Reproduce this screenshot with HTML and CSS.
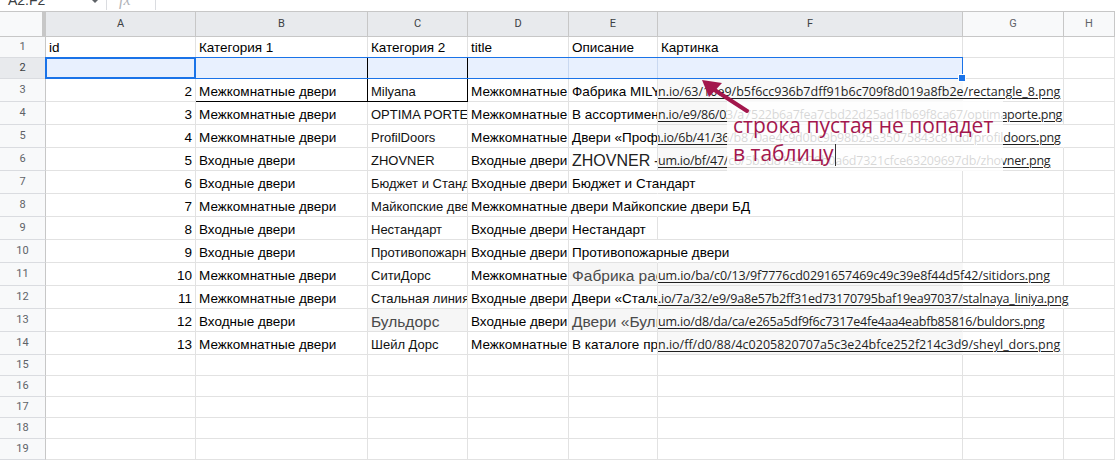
FILE: index.html
```html
<!DOCTYPE html>
<html lang="ru">
<head>
<meta charset="utf-8">
<title>Sheet</title>
<link rel="stylesheet" href="styles.css">
</head>
<body>
<div class="sheet">
  <div class="fbar">
    <div class="fbar-in">
      <span class="namebox">A2:F2</span>
      <span class="dd"></span>
      <span class="sep"></span>
      <span class="fx">fx</span>
      <span class="sep"></span>
    </div>
  </div>

  <div class="row hdr">
    <div class="c c0 corner"></div>
    <div class="c ca hs">A</div>
    <div class="c cb hs">B</div>
    <div class="c cc hs">C</div>
    <div class="c cd hs">D</div>
    <div class="c ce hs">E</div>
    <div class="c cf hs">F</div>
    <div class="c cg">G</div>
    <div class="c ch">H</div>
  </div>

  <div class="row rs">
    <div class="c c0 rh">1</div>
    <div class="c ca">id</div>
    <div class="c cb">Категория 1</div>
    <div class="c cc">Категория 2</div>
    <div class="c cd">title</div>
    <div class="c ce">Описание</div>
    <div class="c cf">Картинка</div>
    <div class="c cg"></div>
    <div class="c ch"></div>
  </div>

  <div class="row rs selrow">
    <div class="c c0 rh rhs">2</div>
    <div class="c ca sb"></div>
    <div class="c cb sb blk-r"></div>
    <div class="c cc sb blk-r"></div>
    <div class="c cd sb"></div>
    <div class="c ce sb"></div>
    <div class="c cf sb"></div>
    <div class="c cg"></div>
    <div class="c ch"></div>
  </div>

  <div class="row rt">
    <div class="c c0 rh">3</div>
    <div class="c ca num">2</div>
    <div class="c cb blk-r blk-b">Межкомнатные двери</div>
    <div class="c cc cct blk-r blk-b">Milyana</div>
    <div class="c cd">Межкомнатные двери</div>
    <div class="c ce">Фабрика MILYANA</div>
    <div class="c cf lk nr"><span class="u">n.io/63/10e9/b5f6cc936b7dff91b6c709f8d019a8fb2e/rectangle_8.png</span></div>
    <div class="c cg"></div>
    <div class="c ch"></div>
  </div>

  <div class="row rt">
    <div class="c c0 rh">4</div>
    <div class="c ca num">3</div>
    <div class="c cb">Межкомнатные двери</div>
    <div class="c cc cct">OPTIMA PORTE</div>
    <div class="c cd">Межкомнатные двери</div>
    <div class="c ce">В ассортименте</div>
    <div class="c cf lk nr"><span class="u ls3">n.io/e9/86/03/a7522b6a7fea7cbd22d25ad1fb69f8ca67/optimaporte.png</span></div>
    <div class="c cg"></div>
    <div class="c ch"></div>
  </div>

  <div class="row rt">
    <div class="c c0 rh">5</div>
    <div class="c ca num">4</div>
    <div class="c cb">Межкомнатные двери</div>
    <div class="c cc cct">ProfilDoors</div>
    <div class="c cd">Межкомнатные двери</div>
    <div class="c ce">Двери «Профиль Дорс»</div>
    <div class="c cf lk nr"><span class="u shift ls2">n.io/6b/41/36/b870ae4c9d0bc9b98b25e35075843c81dd/profildoors.png</span></div>
    <div class="c cg nr"></div>
    <div class="c ch"></div>
  </div>

  <div class="row rt">
    <div class="c c0 rh">6</div>
    <div class="c ca num">5</div>
    <div class="c cb">Входные двери</div>
    <div class="c cc cct">ZHOVNER</div>
    <div class="c cd">Входные двери</div>
    <div class="c ce big">ZHOVNER – производитель</div>
    <div class="c cf lk nr"><span class="u ls3">um.io/bf/47/c6/5b3d81e4c29b0a6d7321cfce63209697db/zhovner.png</span></div>
    <div class="c cg"></div>
    <div class="c ch"></div>
  </div>

  <div class="row rt">
    <div class="c c0 rh">7</div>
    <div class="c ca num">6</div>
    <div class="c cb">Входные двери</div>
    <div class="c cc cct">Бюджет и Стандарт</div>
    <div class="c cd">Входные двери</div>
    <div class="c ce ov nr">Бюджет и Стандарт</div>
    <div class="c cf"></div>
    <div class="c cg"></div>
    <div class="c ch"></div>
  </div>

  <div class="row rt">
    <div class="c c0 rh">8</div>
    <div class="c ca num">7</div>
    <div class="c cb">Межкомнатные двери</div>
    <div class="c cc cct">Майкопские двери БД</div>
    <div class="c cd ov nr">Межкомнатные двери Майкопские двери БД</div>
    <div class="c ce nr"></div>
    <div class="c cf"></div>
    <div class="c cg"></div>
    <div class="c ch"></div>
  </div>

  <div class="row rt">
    <div class="c c0 rh">9</div>
    <div class="c ca num">8</div>
    <div class="c cb">Входные двери</div>
    <div class="c cc cct">Нестандарт</div>
    <div class="c cd">Входные двери</div>
    <div class="c ce">Нестандарт</div>
    <div class="c cf"></div>
    <div class="c cg"></div>
    <div class="c ch"></div>
  </div>

  <div class="row rt">
    <div class="c c0 rh">10</div>
    <div class="c ca num">9</div>
    <div class="c cb">Входные двери</div>
    <div class="c cc cct">Противопожарные двери</div>
    <div class="c cd">Входные двери</div>
    <div class="c ce ov nr">Противопожарные двери</div>
    <div class="c cf"></div>
    <div class="c cg"></div>
    <div class="c ch"></div>
  </div>

  <div class="row rt">
    <div class="c c0 rh">11</div>
    <div class="c ca num">10</div>
    <div class="c cb">Межкомнатные двери</div>
    <div class="c cc cct">СитиДорс</div>
    <div class="c cd">Межкомнатные двери</div>
    <div class="c ce gr mid">Фабрика расположена</div>
    <div class="c cf lk nr"><span class="u ls1">um.io/ba/c0/13/9f7776cd0291657469c49c39e8f44d5f42/sitidors.png</span></div>
    <div class="c cg"></div>
    <div class="c ch"></div>
  </div>

  <div class="row rt">
    <div class="c c0 rh">12</div>
    <div class="c ca num">11</div>
    <div class="c cb">Межкомнатные двери</div>
    <div class="c cc cct">Стальная линия</div>
    <div class="c cd">Входные двери</div>
    <div class="c ce">Двери «Стальная линия»</div>
    <div class="c cf lk nr"><span class="u ls2">.io/7a/32/e9/9a8e57b2ff31ed73170795baf19ea97037/stalnaya_liniya.png</span></div>
    <div class="c cg nr"></div>
    <div class="c ch"></div>
  </div>

  <div class="row rt">
    <div class="c c0 rh">13</div>
    <div class="c ca num">12</div>
    <div class="c cb">Входные двери</div>
    <div class="c cc gr mid">Бульдорс</div>
    <div class="c cd">Входные двери</div>
    <div class="c ce gr mid">Двери «Бульдорс»</div>
    <div class="c cf lk nr"><span class="u ls2">um.io/d8/da/ca/e265a5df9f6c7317e4fe4aa4eabfb85816/buldors.png</span></div>
    <div class="c cg"></div>
    <div class="c ch"></div>
  </div>

  <div class="row rt">
    <div class="c c0 rh">14</div>
    <div class="c ca num">13</div>
    <div class="c cb">Межкомнатные двери</div>
    <div class="c cc cct">Шейл Дорс</div>
    <div class="c cd">Межкомнатные двери</div>
    <div class="c ce">В каталоге представлены</div>
    <div class="c cf lk nr"><span class="u">n.io/ff/d0/88/4c0205820707a5c3e24bfce252f214c3d9/sheyl_dors.png</span></div>
    <div class="c cg"></div>
    <div class="c ch"></div>
  </div>

  <div class="row rs"><div class="c c0 rh">15</div><div class="c ca"></div><div class="c cb"></div><div class="c cc"></div><div class="c cd"></div><div class="c ce"></div><div class="c cf"></div><div class="c cg"></div><div class="c ch"></div></div>
  <div class="row rs"><div class="c c0 rh">16</div><div class="c ca"></div><div class="c cb"></div><div class="c cc"></div><div class="c cd"></div><div class="c ce"></div><div class="c cf"></div><div class="c cg"></div><div class="c ch"></div></div>
  <div class="row rs"><div class="c c0 rh">17</div><div class="c ca"></div><div class="c cb"></div><div class="c cc"></div><div class="c cd"></div><div class="c ce"></div><div class="c cf"></div><div class="c cg"></div><div class="c ch"></div></div>
  <div class="row rs"><div class="c c0 rh">18</div><div class="c ca"></div><div class="c cb"></div><div class="c cc"></div><div class="c cd"></div><div class="c ce"></div><div class="c cf"></div><div class="c cg"></div><div class="c ch"></div></div>
  <div class="row rs"><div class="c c0 rh">19</div><div class="c ca"></div><div class="c cb"></div><div class="c cc"></div><div class="c cd"></div><div class="c ce"></div><div class="c cf"></div><div class="c cg"></div><div class="c ch"></div></div>

  <div class="range"></div>
  <div class="active"></div>
  <div class="handle"></div>

  <div class="note">строка пустая не попадет<br>в таблицу<span class="caret"></span></div>

  <svg class="arrow" width="1115" height="462" viewBox="0 0 1115 462">
    <line x1="747" y1="111" x2="710" y2="87" stroke="#a3174d" stroke-width="4" stroke-linecap="round"/>
    <polygon points="702,80 722,83 709,97" fill="#a3174d"/>
  </svg>
</div>
</body>
</html>
```

FILE: styles.css
```css
html, body {
  margin: 0;
  padding: 0;
  background: #ffffff;
}

body {
  font-family: "Liberation Sans", Arial, sans-serif;
  color: #000;
}

.sheet {
  position: relative;
  width: 1115px;
  height: 462px;
  overflow: hidden;
  background: #fff;
}

/* formula bar (cut off at top) */
.fbar {
  height: 12px;
  box-sizing: border-box;
  border-bottom: 1px solid #c7c7c7;
  overflow: hidden;
}

.fbar-in {
  display: flex;
  align-items: center;
  height: 20px;
  margin-top: -10px;
  padding-left: 8px;
}

.namebox {
  font-size: 14px;
  color: #3c4043;
  width: 82px;
}

.dd {
  width: 0;
  height: 0;
  border-left: 5px solid transparent;
  border-right: 5px solid transparent;
  border-top: 5px solid #5f6368;
}

.sep {
  width: 1px;
  height: 20px;
  background: #dadce0;
  margin-left: 6px;
}

.fx {
  font-family: "Liberation Serif", serif;
  font-style: italic;
  font-size: 16px;
  color: #b0b3b8;
  margin-left: 12px;
  width: 30px;
}

/* grid */
.row {
  display: flex;
}

.rs { height: 21px; }
.rt { height: 23px; }
.hdr { height: 25px; }

.c {
  box-sizing: border-box;
  height: 100%;
  border-right: 1px solid #e2e2e2;
  border-bottom: 1px solid #e2e2e2;
  padding: 0 3px 1px;
  display: flex;
  align-items: flex-end;
  overflow: hidden;
  white-space: nowrap;
  font-size: 13.5px;
  line-height: 16px;
  flex: 0 0 auto;
}

.c0 { width: 46px; }
.ca { width: 150px; }
.cb { width: 172px; }
.cc { width: 100px; }
.cd { width: 101px; }
.ce { width: 89px; }
.cf { width: 305px; }
.cg { width: 101px; }
.ch { flex: 1 1 auto; }

.cct { font-size: 13px; color: #111; }

.hdr .c {
  justify-content: center;
  align-items: center;
  padding: 0;
  font-family: "Roboto", "Liberation Sans", sans-serif;
  font-size: 11px;
  color: #5f6368;
  background: #f8f9fa;
  border-right-color: #c7c7c7;
  border-bottom-color: #c7c7c7;
}

.hdr .hs {
  background: #e8eaed;
  color: #3c4043;
}

.hdr .corner {
  border-right: 4px solid #c7c7c7;
}

.rh {
  justify-content: center;
  align-items: center;
  padding: 0;
  font-family: "Roboto", "Liberation Sans", sans-serif;
  font-size: 11px;
  color: #5f6368;
  background: #f8f9fa;
  border-right-color: #c7c7c7;
  border-bottom-color: #dadce0;
}

.rhs {
  background: #e8eaed;
  color: #3c4043;
}

.num {
  justify-content: flex-end;
}

.sb {
  background: #e8f0fe;
  border-right-color: #c9d8f0;
}

.blk-r { border-right-color: #000; }
.blk-b { border-bottom-color: #000; }

.ov { overflow: visible; }
.nr { border-right-color: transparent; }

.lk {
  overflow: visible;
  padding: 0 0 1px 0;
  background: #f8f8f8;
  clip-path: inset(-2px -600px -2px 0);
}

.u {
  font-family: "Open Sans", sans-serif;
  font-size: 12.5px;
  color: #1f1f1f;
  text-decoration: underline;
  text-underline-offset: 2px;
}

.ls1 { letter-spacing: -0.1px; }
.ls2 { letter-spacing: -0.2px; }
.ls3 { letter-spacing: -0.24px; }

.shift {
  margin-left: -5px;
}

.big {
  font-size: 16px;
  color: #222;
}

.mid {
  font-size: 15.5px;
}

.gr {
  color: #4a4a4a;
  background: #f6f6f6;
}

/* selection */
.range {
  position: absolute;
  left: 45px;
  top: 57px;
  width: 918px;
  height: 22px;
  box-sizing: border-box;
  border: 1px solid #1a73e8;
}

.active {
  position: absolute;
  left: 45px;
  top: 57px;
  width: 151px;
  height: 22px;
  box-sizing: border-box;
  border: 2px solid #1a73e8;
}

.handle {
  position: absolute;
  left: 958px;
  top: 74px;
  width: 6px;
  height: 6px;
  background: #1a73e8;
  border: 1px solid #fff;
}

/* annotation */
.note {
  position: absolute;
  left: 727px;
  top: 101px;
  width: 276px;
  height: 70px;
  box-sizing: border-box;
  padding: 11px 0 0 6px;
  background: rgba(255, 255, 255, 0.82);
  font-family: "Open Sans", sans-serif;
  font-size: 21px;
  line-height: 27.5px;
  color: #a3174d;
  white-space: nowrap;
  z-index: 2;
}

.caret {
  display: inline-block;
  width: 1px;
  height: 22px;
  background: #333;
  vertical-align: -5px;
  margin-left: 1px;
}

.arrow {
  position: absolute;
  left: 0;
  top: 0;
  z-index: 3;
  pointer-events: none;
}
```
